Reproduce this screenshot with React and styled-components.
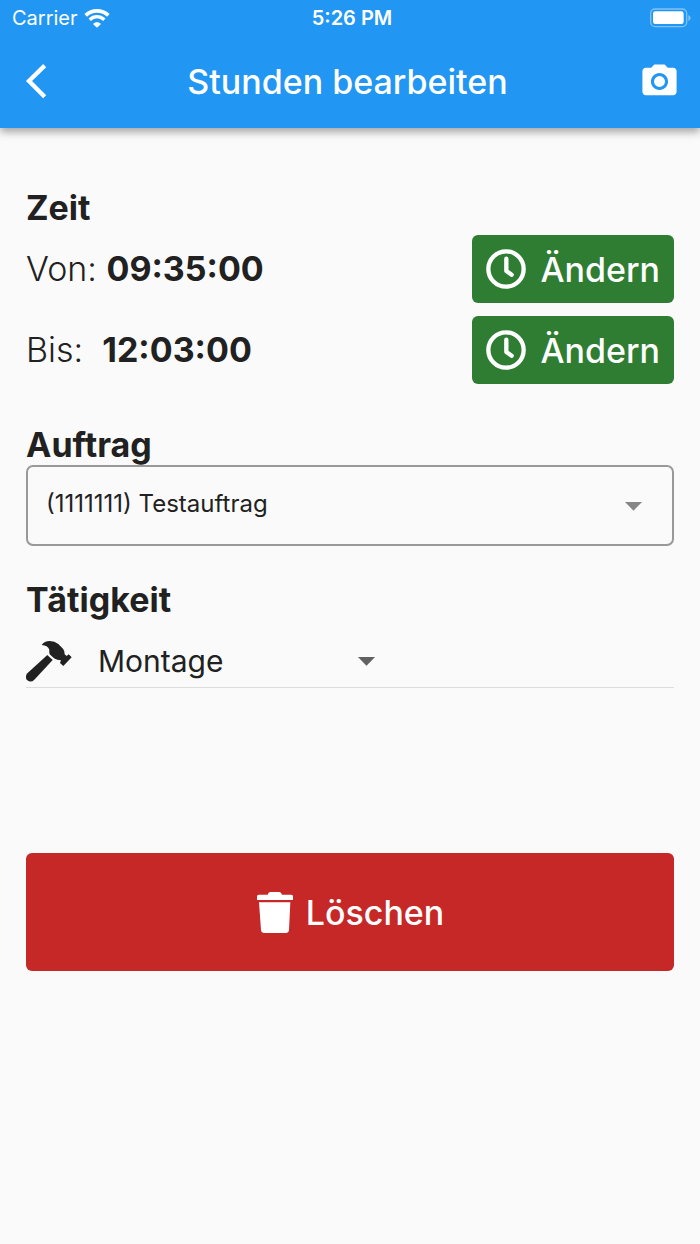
import { useState } from "react";
import styled, { createGlobalStyle } from "styled-components";
import { MdArrowDropDown, MdCameraAlt } from "react-icons/md";

const BackIcon = () => (
  <svg width="40" height="40" viewBox="0 0 120 120" fill="none" aria-hidden="true">
    <path d="M86 14L39 60L86 107" stroke="#fff" strokeWidth="13" />
  </svg>
);

const WifiIcon = () => (
  <svg width="26" height="20" viewBox="0 0 78 60" fill="none" aria-hidden="true">
    <path d="M5 22C24 4 54 4 73 22" stroke="#fff" strokeWidth="11" />
    <path d="M17 35C30 23 48 23 61 35" stroke="#fff" strokeWidth="10" />
    <path d="M27 48C34 41 44 41 51 48L39 59Z" fill="#fff" />
  </svg>
);

const BatteryIcon = () => (
  <svg width="42" height="20" viewBox="0 0 126 60" aria-hidden="true">
    <rect x="2" y="3" width="108" height="53" rx="13" fill="none" stroke="#7fc2f9" strokeWidth="4" />
    <rect x="9" y="10" width="92" height="38" rx="7" fill="#fff" />
    <path d="M115 21Q122 24 122 30T115 39Z" fill="#7fc2f9" />
  </svg>
);

const ClockIcon = () => (
  <svg width="40" height="40" viewBox="0 0 120 120" fill="none" stroke="#fff" aria-hidden="true">
    <circle cx="60" cy="60" r="53" strokeWidth="13" />
    <path d="M61 29V66L77 77" strokeWidth="13" strokeLinecap="round" strokeLinejoin="round" />
  </svg>
);

const HammerIcon = () => (
  <svg width="47" height="44" viewBox="33 25 141 132" fill="#212121" aria-hidden="true">
    <path d="M97 73L113 88L58 147Q48 157 37 149Q28 139 37 128Z" />
    <path d="M80 43Q88 31 104 31Q119 31 130 40L144 54Q150 61 149 71L155 76L161 71L170 80L145 106L135 97L138 89Q126 89 117 83L104 71Q102 64 103 57Q98 44 80 43Z" />
  </svg>
);

const TrashIcon = () => (
  <svg width="38" height="43" viewBox="78 153 114 129" fill="#fff" aria-hidden="true">
    <path d="M86 164H113Q115 156 121 156H148Q154 156 156 164H184Q189 164 189 169V180H81V169Q81 164 86 164Z" />
    <path d="M87 187H181L177 270Q176 279 167 279H103Q94 279 93 270Z" />
  </svg>
);

const App = () => {
  const [order, setOrder] = useState("1111111");
  const [activity, setActivity] = useState("montage");

  return (
    <>
      <GlobalStyle />
      <Header>
        <StatusBar>
          <Carrier>
            Carrier
            <WifiIcon />
          </Carrier>
          <Clock>5:26 PM</Clock>
          <Battery>
            <BatteryIcon />
          </Battery>
        </StatusBar>
        <AppBar>
          <IconButton type="button" aria-label="Zurück">
            <BackIcon />
          </IconButton>
          <Title>Stunden bearbeiten</Title>
          <IconButton type="button" aria-label="Kamera">
            <MdCameraAlt size={41} />
          </IconButton>
        </AppBar>
      </Header>
      <Main>
        <section>
          <Heading>Zeit</Heading>
          <TimeList>
            <TimeRow>
              <TimeText>
                Von: <strong>09:35:00</strong>
              </TimeText>
              <ChangeButton type="button">
                <ClockIcon />
                Ändern
              </ChangeButton>
            </TimeRow>
            <TimeRow>
              <TimeText>
                Bis:&nbsp; <strong>12:03:00</strong>
              </TimeText>
              <ChangeButton type="button">
                <ClockIcon />
                Ändern
              </ChangeButton>
            </TimeRow>
          </TimeList>
        </section>
        <OrderSection>
          <Heading as="label" htmlFor="order">
            Auftrag
          </Heading>
          <OrderField>
            <OrderSelect id="order" value={order} onChange={(e) => setOrder(e.target.value)}>
              <option value="1111111">(1111111) Testauftrag</option>
            </OrderSelect>
            <Arrow size={41} color="#868686" />
          </OrderField>
        </OrderSection>
        <ActivitySection>
          <Heading as="label" htmlFor="activity">
            Tätigkeit
          </Heading>
          <ActivityRow>
            <HammerIcon />
            <ActivityField>
              <ActivitySelect
                id="activity"
                value={activity}
                onChange={(e) => setActivity(e.target.value)}
              >
                <option value="montage">Montage</option>
              </ActivitySelect>
              <Arrow size={41} color="#616161" />
            </ActivityField>
          </ActivityRow>
        </ActivitySection>
        <DeleteButton type="button">
          <TrashIcon />
          Löschen
        </DeleteButton>
      </Main>
    </>
  );
};
export default App;

const GlobalStyle = createGlobalStyle`
  * {
    box-sizing: border-box;
  }
  body {
    margin: 0;
    background: #fafafa;
    color: #212121;
    font-family: Inter, "Liberation Sans", sans-serif;
  }
  button,
  select {
    font-family: inherit;
    color: inherit;
  }
  svg {
    display: block;
    flex-shrink: 0;
  }
`;

const Header = styled.header`
  background: #2196f3;
  color: #fff;
  box-shadow: 0 4px 8px rgba(0, 0, 0, 0.35);
`;
const StatusBar = styled.div`
  display: grid;
  grid-template-columns: 1fr auto 1fr;
  align-items: center;
  height: 36px;
  padding: 0 8px 0 12px;
  font-size: 20px;
`;
const Carrier = styled.div`
  display: flex;
  align-items: center;
  gap: 6px;
`;
const Clock = styled.div`
  font-weight: 600;
`;
const Battery = styled.div`
  justify-self: end;
`;
const AppBar = styled.div`
  display: flex;
  align-items: center;
  justify-content: space-between;
  height: 92px;
  padding: 0 20px 2px 16px;
`;
const Title = styled.h1`
  margin: 0;
  font-size: 34px;
  font-weight: 500;
`;
const IconButton = styled.button`
  padding: 0;
  border: 0;
  background: none;
`;

const Main = styled.main`
  padding: 60px 26px;
`;
const Heading = styled.h2`
  display: block;
  margin: 0;
  font-size: 34px;
  line-height: 40px;
  font-weight: 700;
`;
const TimeList = styled.div`
  display: grid;
  gap: 13px;
  padding-top: 7px;
`;
const TimeRow = styled.div`
  display: flex;
  align-items: center;
  justify-content: space-between;
`;
const TimeText = styled.div`
  padding-bottom: 2px;
  font-size: 34px;
  font-weight: 300;

  strong {
    font-weight: 700;
  }
`;
const ChangeButton = styled.button`
  display: flex;
  align-items: center;
  gap: 14px;
  height: 68px;
  padding: 0 14px;
  border: 0;
  border-radius: 6px;
  background: #2e7d32;
  color: #fff;
  font-size: 34px;
  font-weight: 500;
`;
const OrderSection = styled.section`
  padding-top: 41px;
`;
const OrderField = styled.div`
  display: grid;
  align-items: center;
`;
const OrderSelect = styled.select`
  grid-area: 1 / 1;
  width: 100%;
  height: 81px;
  padding: 0 60px 4px 18px;
  border: 2px solid #999;
  border-radius: 7px;
  background: none;
  appearance: none;
  font-size: 24px;
`;
const Arrow = styled(MdArrowDropDown)`
  grid-area: 1 / 1;
  justify-self: end;
  margin-right: 20px;
  pointer-events: none;
`;
const ActivitySection = styled.section`
  padding-top: 34px;
`;
const ActivityRow = styled.div`
  display: flex;
  align-items: center;
  gap: 25px;
  height: 68px;
  padding-top: 14px;
  border-bottom: 1px solid #dcdcdc;
`;
const ActivityField = styled.div`
  display: grid;
  align-items: center;
  flex: 0 1 309px;
`;
const ActivitySelect = styled.select`
  grid-area: 1 / 1;
  width: 100%;
  height: 48px;
  padding: 0;
  border: 0;
  background: none;
  appearance: none;
  font-size: 30px;
`;
const DeleteButton = styled.button`
  display: flex;
  align-items: center;
  justify-content: center;
  gap: 12px;
  width: 100%;
  height: 118px;
  margin-top: 165px;
  border: 0;
  border-radius: 6px;
  background: #c62828;
  color: #fff;
  font-size: 34px;
  font-weight: 500;
`;
